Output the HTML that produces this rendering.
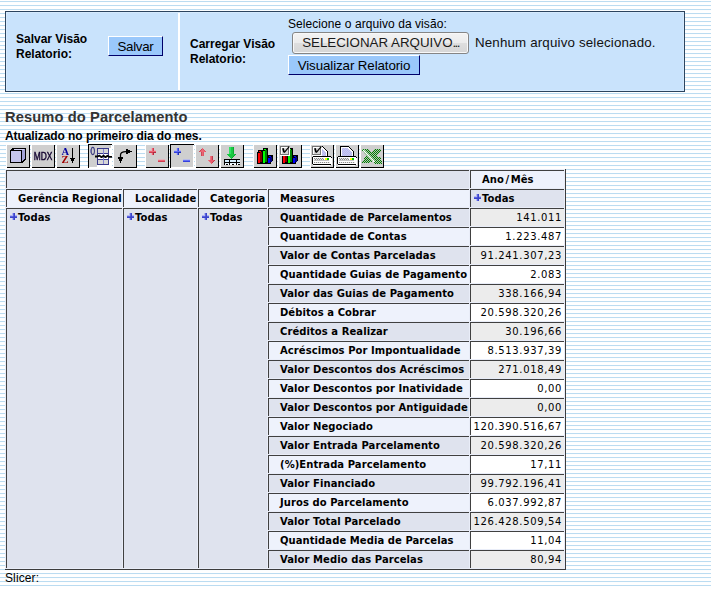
<!DOCTYPE html><html lang="pt"><head><meta charset="utf-8"><title>Resumo do Parcelamento</title><style>
html,body{margin:0;padding:0}
body{width:711px;height:590px;overflow:hidden;position:relative;background:#fff;
 background-image:repeating-linear-gradient(to bottom,#fff 0,#fff 1px,#bbdcf1 1px,#bbdcf1 2px,#fcfeff 2px,#fcfeff 3px,#fff 3px,#fff 4px);
 font-family:"Liberation Sans",Arial,sans-serif;font-size:12px;color:#000}
.abs{position:absolute}
#box{left:5px;top:11px;width:678px;height:79px;border:1px solid #2c445e;background:#d6eafd}
#box .c{position:absolute;top:1px;height:77px;background:#c9e3fc}
#c1{left:1px;width:171px}
#c2{left:174px;width:503px}
#dv{position:absolute;left:172px;top:1px;width:2px;height:77px;background:#fff}
.lbl{font-weight:bold;font-size:12px;line-height:15px;white-space:nowrap}
.btn{box-sizing:border-box;background:#9ac8fb;border:1px solid;border-color:#fff #00006a #00006a #fff;font-size:13.33px;letter-spacing:-0.1px;text-align:center;white-space:nowrap;color:#000}
#title{left:5px;top:109px;font-weight:bold;font-size:14.67px;line-height:17px;color:#333;white-space:nowrap;letter-spacing:.12px}
#sub{left:5px;top:129px;font-weight:bold;font-size:12px;line-height:14px;white-space:nowrap;letter-spacing:-0.08px}
#slicer{left:5px;top:571px;font-size:12px;line-height:14px;letter-spacing:.12px}
#bot{left:0;top:586px;width:711px;height:4px;background:#fff}
#tb{left:0;top:144px;height:24px;width:400px;will-change:transform}
#tb svg{position:absolute;top:0;width:24px;height:24px}
table.mdx{position:absolute;left:5px;top:169px;border-collapse:separate;border-spacing:1px;background:#e9edf8;border-right:1px solid #3c3c3c;border-bottom:1px solid #3c3c3c;
 font-family:"DejaVu Sans",Verdana,sans-serif;table-layout:fixed;width:561px}
table.mdx th,table.mdx td{box-sizing:border-box;height:18px;padding:0;border-top:1px solid #404040;border-left:1px solid #404040;font-size:10px;line-height:13px;white-space:nowrap;overflow:hidden;vertical-align:top}
table.mdx th{font-weight:bold;text-align:left;padding:2px 0 0 11px;letter-spacing:.07px}
table.mdx th.todas{padding-left:3px}
table.mdx td{font-size:10px;letter-spacing:0.64px;text-align:right;padding:2px 2px 0 0;font-weight:normal}
.d{background:#dfe3ee}
.l{background:#eef2fc}
.e{background:#fff}
.o{background:#ececec}
.plus{display:inline-block;width:7px;height:7px;vertical-align:top;margin:2px 1px 0 0}
</style></head><body>

<div id="box" class="abs">
 <div class="c" id="c1"></div><div class="c" id="c2"></div><div id="dv"></div>
 <div class="abs lbl" style="left:10px;top:20px">Salvar Visão<br>Relatorio:</div>
 <div class="abs btn" style="left:102px;top:24px;width:55px;height:20px;line-height:18px;padding-top:1px;letter-spacing:-.3px">Salvar</div>
 <div class="abs lbl" style="left:184px;top:25px">Carregar Visão<br>Relatorio:</div>
 <div class="abs" style="left:282px;top:5px;font-size:12px;letter-spacing:.07px;line-height:14px;white-space:nowrap">Selecione o arquivo da visão:</div>
 <div class="abs" id="fbtn" style="left:286px;top:20px;width:177px;height:22px;box-sizing:border-box;border:1px solid #858585;border-radius:3px;box-shadow:inset 0 0 0 1px #f8f8f8;background:linear-gradient(#f3f3f3 0,#ececec 48%,#dedede 52%,#d6d6d6 100%);font-size:13.33px;line-height:20px;text-align:center;white-space:nowrap;color:#1a1a1a">SELECIONAR ARQUIVO<span style="letter-spacing:-1.6px">...</span></div>
 <div class="abs" style="left:469px;top:23px;font-size:13.33px;line-height:16px;white-space:nowrap;color:#111;letter-spacing:.16px">Nenhum arquivo selecionado.</div>
 <div class="abs btn" style="left:282px;top:43px;width:132px;height:20px;line-height:18px;padding-top:1px">Visualizar Relatorio</div>
</div>
<div id="title" class="abs">Resumo do Parcelamento</div>
<div id="sub" class="abs">Atualizado no primeiro dia do mes.</div>

<div id="tb" class="abs"><svg style="position:absolute;width:0;height:0" width="0" height="0"><defs><pattern id="gd" width="2" height="2" patternUnits="userSpaceOnUse"><rect width="2" height="2" fill="#b4c0b4"/><rect x="0" y="0" width="1" height="1" fill="#008000"/><rect x="1" y="1" width="1" height="1" fill="#008000"/></pattern><pattern id="dith" width="2" height="2" patternUnits="userSpaceOnUse"><rect width="2" height="2" fill="#c8c8f4"/><rect x="0" y="0" width="1" height="1" fill="#b8b8ec"/><rect x="1" y="1" width="1" height="1" fill="#b8b8ec"/></pattern></defs></svg>
<svg style="left:6px" viewBox="0 0 24 24" shape-rendering="crispEdges" ><rect x="0" y="0" width="24" height="24" fill="#fff"/><rect x="1" y="1" width="23" height="23" fill="#000"/><rect x="1" y="1" width="22" height="22" fill="#cfcfcf"/><polygon points="4,6 7,4 20,4 20,15 16,19 4,19" fill="#000"/><polygon points="8,5 19,5 19,6 8,6" fill="#d4d4f4"/><polygon points="7,6 8,5 16,5 15,6" fill="#d4d4f4"/><polygon points="16,6 19,5 19,14 16,17" fill="#a4a4d8"/><rect x="5" y="7" width="10" height="11" fill="#c4c4ec"/></svg>
<svg style="left:31px" viewBox="0 0 24 24" shape-rendering="crispEdges" ><rect x="0" y="0" width="24" height="24" fill="#fff"/><rect x="1" y="1" width="23" height="23" fill="#000"/><rect x="1" y="1" width="22" height="22" fill="#cfcfcf"/><text x="2.8" y="16" font-family="Liberation Sans,Arial,sans-serif" font-size="11" fill="#140430" stroke="#140430" stroke-width="0.45" textLength="18.6" lengthAdjust="spacingAndGlyphs">MDX</text></svg>
<svg style="left:56px" viewBox="0 0 24 24" shape-rendering="crispEdges" ><rect x="0" y="0" width="24" height="24" fill="#fff"/><rect x="1" y="1" width="23" height="23" fill="#000"/><rect x="1" y="1" width="22" height="22" fill="#cfcfcf"/><text x="5.4" y="11" font-family="Liberation Serif,serif" font-size="9.3" font-weight="bold" fill="#0000a0" textLength="7.6" lengthAdjust="spacingAndGlyphs">A</text><text x="5.5" y="19" font-family="Liberation Serif,serif" font-size="9.3" font-weight="bold" fill="#a00000" textLength="7" lengthAdjust="spacingAndGlyphs">Z</text><rect x="16" y="4" width="1" height="15" fill="#000"/><rect x="14" y="14" width="5" height="1" fill="#000"/><rect x="15" y="15" width="3" height="2" fill="#000"/></svg>
<svg style="left:88px" viewBox="0 0 24 24" shape-rendering="crispEdges" ><rect x="0" y="0" width="24" height="24" fill="#000"/><rect x="1" y="1" width="23" height="23" fill="#fff"/><rect x="1" y="1" width="22" height="22" fill="#cfcfcf"/><rect x="21" y="4" width="2" height="19" fill="#fff"/><rect x="9" y="21" width="14" height="2" fill="#fff"/><rect x="9" y="4" width="12" height="17" fill="#38388a"/><rect x="10" y="5" width="5" height="4" fill="#d6d6d6"/><rect x="16" y="5" width="4" height="4" fill="#d6d6d6"/><rect x="10" y="10" width="5" height="5" fill="#fff"/><rect x="16" y="10" width="4" height="5" fill="#fff"/><rect x="10" y="16" width="5" height="4" fill="#d6d6d6"/><rect x="16" y="16" width="4" height="4" fill="#d6d6d6"/><rect x="15" y="5" width="1" height="15" fill="#8484d4"/><rect x="2" y="5" width="1" height="4" fill="#a8a8d0"/><text x="2.6" y="11" font-family="Liberation Sans,Arial,sans-serif" font-size="11" fill="#2c2c78" stroke="#2c2c78" stroke-width="0.3" textLength="4.6" lengthAdjust="spacingAndGlyphs">0</text><path d="M7,12.5 L9.5,12.5 L11.5,11.6 L13.5,13.2 L15.5,11.7 L17.5,13.2 L19.5,11.7 L21.5,12.9 L24,12.9" fill="none" stroke="#000" stroke-width="1.8" stroke-linejoin="round" shape-rendering="geometricPrecision"/></svg>
<svg style="left:113px" viewBox="0 0 24 24" shape-rendering="crispEdges" ><rect x="0" y="0" width="24" height="24" fill="#fff"/><rect x="1" y="1" width="23" height="23" fill="#000"/><rect x="1" y="1" width="22" height="22" fill="#cfcfcf"/><path d="M7.5,13 V11 C7.5,8.5 9.5,7.5 13,7.5" fill="none" stroke="#000" stroke-width="1.25" shape-rendering="geometricPrecision"/><rect x="13" y="5" width="2" height="5" fill="#000"/><rect x="15" y="6" width="2" height="3" fill="#000"/><rect x="17" y="7" width="2" height="1" fill="#000"/><rect x="5" y="13" width="5" height="2" fill="#000"/><rect x="6" y="15" width="3" height="2" fill="#000"/><rect x="7" y="17" width="1" height="2" fill="#000"/></svg>
<svg style="left:145px" viewBox="0 0 24 24" shape-rendering="crispEdges" ><rect x="0" y="0" width="24" height="24" fill="#fff"/><rect x="1" y="1" width="23" height="23" fill="#000"/><rect x="1" y="1" width="22" height="22" fill="#cfcfcf"/><rect x="6" y="4" width="1" height="7" fill="#e4b4bc"/><rect x="4" y="6" width="7" height="1" fill="#e4b4bc"/><rect x="7" y="4" width="1" height="7" fill="#ec6474"/><rect x="8" y="4" width="1" height="7" fill="#d03c50"/><rect x="4" y="7" width="7" height="1" fill="#ec6474"/><rect x="4" y="8" width="7" height="1" fill="#d03c50"/><rect x="8" y="8" width="1" height="1" fill="#b02c40"/><rect x="8" y="9" width="1" height="2" fill="#b02c40"/><rect x="9" y="8" width="2" height="1" fill="#b02c40"/><rect x="13" y="15" width="7" height="1" fill="#e4b4bc"/><rect x="13" y="16" width="7" height="1" fill="#ec6474"/><rect x="13" y="17" width="7" height="1" fill="#d03c50"/></svg>
<svg style="left:170px" viewBox="0 0 24 24" shape-rendering="crispEdges" ><rect x="0" y="0" width="24" height="24" fill="#000"/><rect x="1" y="1" width="23" height="23" fill="#fff"/><rect x="1" y="1" width="22" height="22" fill="#cfcfcf"/><rect x="6" y="4" width="1" height="7" fill="#b8bce8"/><rect x="4" y="6" width="7" height="1" fill="#b8bce8"/><rect x="7" y="4" width="1" height="7" fill="#6470f4"/><rect x="8" y="4" width="1" height="7" fill="#3440dc"/><rect x="4" y="7" width="7" height="1" fill="#6470f4"/><rect x="4" y="8" width="7" height="1" fill="#3440dc"/><rect x="8" y="8" width="1" height="1" fill="#2430b0"/><rect x="8" y="9" width="1" height="2" fill="#2430b0"/><rect x="9" y="8" width="2" height="1" fill="#2430b0"/><rect x="13" y="15" width="7" height="1" fill="#b8bce8"/><rect x="13" y="16" width="7" height="1" fill="#6470f4"/><rect x="13" y="17" width="7" height="1" fill="#3440dc"/></svg>
<svg style="left:195px" viewBox="0 0 24 24" shape-rendering="crispEdges" ><rect x="0" y="0" width="24" height="24" fill="#fff"/><rect x="1" y="1" width="23" height="23" fill="#000"/><rect x="1" y="1" width="22" height="22" fill="#cfcfcf"/><rect x="7" y="4" width="1" height="1" fill="#ec6674"/><rect x="6" y="5" width="3" height="1" fill="#ec6674"/><rect x="5" y="6" width="5" height="1" fill="#ec6674"/><rect x="4" y="7" width="7" height="1" fill="#ec6674"/><rect x="6" y="8" width="3" height="4" fill="#ec6674"/><rect x="6" y="8" width="1" height="4" fill="#c84858"/><rect x="8" y="8" width="1" height="4" fill="#dc5866"/><rect x="6" y="5" width="1" height="1" fill="#c84858"/><rect x="8" y="5" width="1" height="1" fill="#dc5866"/><rect x="5" y="6" width="1" height="1" fill="#c84858"/><rect x="9" y="6" width="1" height="1" fill="#dc5866"/><rect x="4" y="7" width="1" height="1" fill="#c84858"/><rect x="10" y="7" width="1" height="1" fill="#dc5866"/><rect x="15" y="12" width="3" height="4" fill="#e85c6c"/><rect x="15" y="12" width="1" height="4" fill="#ec7480"/><rect x="17" y="12" width="1" height="4" fill="#bc3c4c"/><rect x="13" y="16" width="7" height="1" fill="#e85c6c"/><rect x="13" y="16" width="1" height="1" fill="#ec7480"/><rect x="19" y="16" width="1" height="1" fill="#bc3c4c"/><rect x="14" y="17" width="5" height="1" fill="#e85c6c"/><rect x="14" y="17" width="1" height="1" fill="#ec7480"/><rect x="18" y="17" width="1" height="1" fill="#bc3c4c"/><rect x="15" y="18" width="3" height="1" fill="#e85c6c"/><rect x="15" y="18" width="1" height="1" fill="#ec7480"/><rect x="17" y="18" width="1" height="1" fill="#bc3c4c"/><rect x="16" y="19" width="1" height="1" fill="#e85c6c"/></svg>
<svg style="left:220px" viewBox="0 0 24 24" shape-rendering="crispEdges" ><rect x="0" y="0" width="24" height="24" fill="#fff"/><rect x="1" y="1" width="23" height="23" fill="#000"/><rect x="1" y="1" width="22" height="22" fill="#cfcfcf"/><rect x="9" y="3" width="5" height="7" fill="#18cc44"/><rect x="9" y="3" width="2" height="7" fill="#34e064"/><rect x="13" y="3" width="1" height="7" fill="#10a434"/><rect x="7" y="10" width="9" height="1" fill="#18c840"/><rect x="15" y="10" width="1" height="1" fill="#10a030"/><rect x="8" y="11" width="7" height="1" fill="#18c840"/><rect x="14" y="11" width="1" height="1" fill="#10a030"/><rect x="9" y="12" width="5" height="1" fill="#18c840"/><rect x="13" y="12" width="1" height="1" fill="#10a030"/><rect x="10" y="13" width="3" height="1" fill="#18c840"/><rect x="12" y="13" width="1" height="1" fill="#10a030"/><rect x="11" y="14" width="1" height="1" fill="#18c840"/><rect x="4" y="15" width="16" height="6" fill="#fff"/><rect x="5" y="16" width="4" height="2" fill="#d4ecfc"/><rect x="10" y="16" width="6" height="2" fill="#d4ecfc"/><rect x="17" y="16" width="3" height="2" fill="#d4ecfc"/><rect x="5" y="19" width="4" height="1" fill="#e4f2fc"/><rect x="10" y="19" width="6" height="1" fill="#e4f2fc"/><rect x="17" y="19" width="3" height="1" fill="#e4f2fc"/><rect x="4" y="15" width="16" height="1" fill="#000"/><rect x="4" y="18" width="16" height="1" fill="#000"/><rect x="4" y="15" width="1" height="6" fill="#000"/><rect x="9" y="15" width="1" height="6" fill="#000"/><rect x="16" y="15" width="1" height="6" fill="#000"/><rect x="6" y="20" width="2" height="1" fill="#000"/><rect x="12" y="20" width="2" height="1" fill="#000"/><rect x="18" y="20" width="2" height="1" fill="#000"/></svg>
<svg style="left:253px" viewBox="0 0 24 24" shape-rendering="crispEdges" ><rect x="0" y="0" width="24" height="24" fill="#fff"/><rect x="1" y="1" width="23" height="23" fill="#000"/><rect x="1" y="1" width="22" height="22" fill="#cfcfcf"/><rect x="4" y="8" width="6" height="12" fill="#000"/><rect x="5" y="6" width="5" height="2" fill="#000"/><rect x="5" y="9" width="2" height="10" fill="#ff0000"/><rect x="6" y="7" width="2" height="1" fill="#ff0000"/><rect x="7" y="8" width="2" height="10" fill="#800000"/><rect x="9" y="6" width="6" height="14" fill="#000"/><rect x="10" y="4" width="5" height="2" fill="#000"/><rect x="10" y="7" width="2" height="12" fill="#00ff00"/><rect x="11" y="5" width="2" height="1" fill="#00ff00"/><rect x="12" y="6" width="2" height="12" fill="#008000"/><rect x="14" y="13" width="5" height="7" fill="#000"/><rect x="15" y="11" width="5" height="7" fill="#000"/><rect x="15" y="14" width="2" height="5" fill="#0000ff"/><rect x="16" y="12" width="2" height="1" fill="#0000ff"/><rect x="17" y="13" width="2" height="5" fill="#000080"/><rect x="18" y="18" width="2" height="2" fill="#cfcfcf"/><rect x="19" y="17" width="1" height="1" fill="#cfcfcf"/></svg>
<svg style="left:278px" viewBox="0 0 24 24" shape-rendering="crispEdges" ><rect x="0" y="0" width="24" height="24" fill="#fff"/><rect x="1" y="1" width="23" height="23" fill="#000"/><rect x="1" y="1" width="22" height="22" fill="#cfcfcf"/><rect x="4" y="8" width="6" height="12" fill="#000"/><rect x="5" y="6" width="5" height="2" fill="#000"/><rect x="5" y="9" width="2" height="10" fill="#ff0000"/><rect x="6" y="7" width="2" height="1" fill="#ff0000"/><rect x="7" y="8" width="2" height="10" fill="#800000"/><rect x="9" y="6" width="6" height="14" fill="#000"/><rect x="10" y="4" width="5" height="2" fill="#000"/><rect x="10" y="7" width="2" height="12" fill="#00ff00"/><rect x="11" y="5" width="2" height="1" fill="#00ff00"/><rect x="12" y="6" width="2" height="12" fill="#008000"/><rect x="14" y="13" width="5" height="7" fill="#000"/><rect x="15" y="11" width="5" height="7" fill="#000"/><rect x="15" y="14" width="2" height="5" fill="#0000ff"/><rect x="16" y="12" width="2" height="1" fill="#0000ff"/><rect x="17" y="13" width="2" height="5" fill="#000080"/><rect x="18" y="18" width="2" height="2" fill="#cfcfcf"/><rect x="19" y="17" width="1" height="1" fill="#cfcfcf"/><rect x="2" y="2" width="10" height="10" fill="#fff"/><rect x="2" y="2" width="9" height="9" fill="#747474"/><rect x="3" y="3" width="7" height="7" fill="#fff"/><rect x="4" y="4" width="6" height="6" fill="#d6d6d6"/><path d="M4.9,4.3 L6.1,8.3" stroke="#000" stroke-width="1.7" fill="none" shape-rendering="geometricPrecision"/><path d="M6.2,8.6 L11.4,2.3" stroke="#000" stroke-width="1.15" fill="none" shape-rendering="geometricPrecision"/></svg>
<svg style="left:310px" viewBox="0 0 24 24" shape-rendering="crispEdges" ><rect x="0" y="0" width="24" height="24" fill="#fff"/><rect x="1" y="1" width="23" height="23" fill="#000"/><rect x="1" y="1" width="22" height="22" fill="#cfcfcf"/><polygon points="4,2 13,2 18,8 18,12 4,12" fill="#000"/><polygon points="5,3 13,3 17,8 17,12 5,12" fill="#fff"/><polygon points="6,4 12,4 16,9 16,12 6,12" fill="url(#dith)"/><rect x="3" y="12" width="18" height="9" fill="#000"/><rect x="2" y="13" width="20" height="7" fill="#000"/><rect x="3" y="13" width="18" height="7" fill="#fff"/><rect x="3" y="21" width="17" height="1" fill="#fff"/><rect x="21" y="14" width="1" height="7" fill="#fff"/><rect x="4" y="14" width="10" height="2" fill="#e4e4e4"/><rect x="4" y="14" width="1" height="1" fill="#8c8c8c"/><rect x="5" y="15" width="1" height="1" fill="#8c8c8c"/><rect x="6" y="14" width="1" height="1" fill="#8c8c8c"/><rect x="7" y="15" width="1" height="1" fill="#8c8c8c"/><rect x="8" y="14" width="1" height="1" fill="#8c8c8c"/><rect x="9" y="15" width="1" height="1" fill="#8c8c8c"/><rect x="10" y="14" width="1" height="1" fill="#8c8c8c"/><rect x="11" y="15" width="1" height="1" fill="#8c8c8c"/><rect x="12" y="14" width="1" height="1" fill="#8c8c8c"/><rect x="13" y="15" width="1" height="1" fill="#8c8c8c"/><rect x="4" y="16" width="15" height="1" fill="#c4c4c4"/><rect x="4" y="18" width="16" height="1" fill="#e4e4e4"/><rect x="4" y="18" width="1" height="1" fill="#8c8c8c"/><rect x="6" y="18" width="1" height="1" fill="#8c8c8c"/><rect x="8" y="18" width="1" height="1" fill="#8c8c8c"/><rect x="10" y="18" width="1" height="1" fill="#8c8c8c"/><rect x="12" y="18" width="1" height="1" fill="#8c8c8c"/><rect x="14" y="18" width="1" height="1" fill="#8c8c8c"/><rect x="16" y="18" width="1" height="1" fill="#8c8c8c"/><rect x="18" y="18" width="1" height="1" fill="#8c8c8c"/><rect x="15" y="14" width="2" height="2" fill="#ffff00"/><rect x="17" y="14" width="2" height="2" fill="#00c800"/><rect x="2" y="2" width="10" height="10" fill="#fff"/><rect x="2" y="2" width="9" height="9" fill="#747474"/><rect x="3" y="3" width="7" height="7" fill="#fff"/><rect x="4" y="4" width="6" height="6" fill="#d6d6d6"/><path d="M4.9,4.3 L6.1,8.3" stroke="#000" stroke-width="1.7" fill="none" shape-rendering="geometricPrecision"/><path d="M6.2,8.6 L11.4,2.3" stroke="#000" stroke-width="1.15" fill="none" shape-rendering="geometricPrecision"/></svg>
<svg style="left:335px" viewBox="0 0 24 24" shape-rendering="crispEdges" ><rect x="0" y="0" width="24" height="24" fill="#fff"/><rect x="1" y="1" width="23" height="23" fill="#000"/><rect x="1" y="1" width="22" height="22" fill="#cfcfcf"/><polygon points="5,2 14,2 19,8 19,12 5,12" fill="#000"/><polygon points="6,3 14,3 18,8 18,12 6,12" fill="#fff"/><polygon points="7,4 13,4 17,9 17,12 7,12" fill="url(#dith)"/><rect x="3" y="12" width="18" height="9" fill="#000"/><rect x="2" y="13" width="20" height="7" fill="#000"/><rect x="3" y="13" width="18" height="7" fill="#fff"/><rect x="3" y="21" width="17" height="1" fill="#fff"/><rect x="21" y="14" width="1" height="7" fill="#fff"/><rect x="4" y="14" width="10" height="2" fill="#e4e4e4"/><rect x="4" y="14" width="1" height="1" fill="#8c8c8c"/><rect x="5" y="15" width="1" height="1" fill="#8c8c8c"/><rect x="6" y="14" width="1" height="1" fill="#8c8c8c"/><rect x="7" y="15" width="1" height="1" fill="#8c8c8c"/><rect x="8" y="14" width="1" height="1" fill="#8c8c8c"/><rect x="9" y="15" width="1" height="1" fill="#8c8c8c"/><rect x="10" y="14" width="1" height="1" fill="#8c8c8c"/><rect x="11" y="15" width="1" height="1" fill="#8c8c8c"/><rect x="12" y="14" width="1" height="1" fill="#8c8c8c"/><rect x="13" y="15" width="1" height="1" fill="#8c8c8c"/><rect x="4" y="16" width="15" height="1" fill="#c4c4c4"/><rect x="4" y="18" width="16" height="1" fill="#e4e4e4"/><rect x="4" y="18" width="1" height="1" fill="#8c8c8c"/><rect x="6" y="18" width="1" height="1" fill="#8c8c8c"/><rect x="8" y="18" width="1" height="1" fill="#8c8c8c"/><rect x="10" y="18" width="1" height="1" fill="#8c8c8c"/><rect x="12" y="18" width="1" height="1" fill="#8c8c8c"/><rect x="14" y="18" width="1" height="1" fill="#8c8c8c"/><rect x="16" y="18" width="1" height="1" fill="#8c8c8c"/><rect x="18" y="18" width="1" height="1" fill="#8c8c8c"/><rect x="15" y="14" width="2" height="2" fill="#ffff00"/><rect x="17" y="14" width="2" height="2" fill="#00c800"/></svg>
<svg style="left:360px" viewBox="0 0 24 24" shape-rendering="crispEdges" ><rect x="0" y="0" width="24" height="24" fill="#fff"/><rect x="1" y="1" width="23" height="23" fill="#000"/><rect x="1" y="1" width="22" height="22" fill="#cfcfcf"/><polygon points="2,5 8,5 11.5,8 15,5 21,5 21,7 17,11.5 19,13 21,13 21,15 19.5,15 22,18 22,20 15.5,20 12.8,16.6 9.6,19 2,19 2,17.5 6.5,12 2,6.5" fill="url(#gd)"/><path d="M3.2,6.2 L14.6,17.8" stroke="#fff" stroke-width="1.5" shape-rendering="geometricPrecision"/></svg></div>
<table class="mdx" cellspacing="1"><colgroup><col style="width:116px"><col style="width:74px"><col style="width:69px"><col style="width:201px"><col style="width:94px"></colgroup>
<tr><th class="d" colspan="4"></th><th class="l">Ano<span style="padding:0 1.5px">/</span>Mês</th></tr>
<tr><th class="l">Gerência Regional</th><th class="l">Localidade</th><th class="l">Categoria</th><th class="l">Measures</th><th class="d todas"><svg class="plus" viewBox="0 0 7 7" shape-rendering="crispEdges"><rect x="2" y="0" width="1" height="7" fill="#b4b8ee"/><rect x="0" y="2" width="7" height="1" fill="#b4b8ee"/><rect x="3" y="0" width="1" height="7" fill="#5c64e0"/><rect x="0" y="3" width="7" height="1" fill="#5c64e0"/><rect x="4" y="0" width="1" height="7" fill="#3c44c8"/><rect x="0" y="4" width="7" height="1" fill="#3c44c8"/><rect x="3" y="3" width="1" height="1" fill="#4850d4"/></svg>Todas</th></tr>
<tr><th class="d todas" rowspan="19"><svg class="plus" viewBox="0 0 7 7" shape-rendering="crispEdges"><rect x="2" y="0" width="1" height="7" fill="#b4b8ee"/><rect x="0" y="2" width="7" height="1" fill="#b4b8ee"/><rect x="3" y="0" width="1" height="7" fill="#5c64e0"/><rect x="0" y="3" width="7" height="1" fill="#5c64e0"/><rect x="4" y="0" width="1" height="7" fill="#3c44c8"/><rect x="0" y="4" width="7" height="1" fill="#3c44c8"/><rect x="3" y="3" width="1" height="1" fill="#4850d4"/></svg>Todas</th><th class="d todas" rowspan="19"><svg class="plus" viewBox="0 0 7 7" shape-rendering="crispEdges"><rect x="2" y="0" width="1" height="7" fill="#b4b8ee"/><rect x="0" y="2" width="7" height="1" fill="#b4b8ee"/><rect x="3" y="0" width="1" height="7" fill="#5c64e0"/><rect x="0" y="3" width="7" height="1" fill="#5c64e0"/><rect x="4" y="0" width="1" height="7" fill="#3c44c8"/><rect x="0" y="4" width="7" height="1" fill="#3c44c8"/><rect x="3" y="3" width="1" height="1" fill="#4850d4"/></svg>Todas</th><th class="d todas" rowspan="19"><svg class="plus" viewBox="0 0 7 7" shape-rendering="crispEdges"><rect x="2" y="0" width="1" height="7" fill="#b4b8ee"/><rect x="0" y="2" width="7" height="1" fill="#b4b8ee"/><rect x="3" y="0" width="1" height="7" fill="#5c64e0"/><rect x="0" y="3" width="7" height="1" fill="#5c64e0"/><rect x="4" y="0" width="1" height="7" fill="#3c44c8"/><rect x="0" y="4" width="7" height="1" fill="#3c44c8"/><rect x="3" y="3" width="1" height="1" fill="#4850d4"/></svg>Todas</th><th class="d">Quantidade de Parcelamentos</th><td class="o">141.011</td></tr>
<tr><th class="l">Quantidade de Contas</th><td class="e">1.223.487</td></tr>
<tr><th class="d">Valor de Contas Parceladas</th><td class="o">91.241.307,23</td></tr>
<tr><th class="l">Quantidade Guias de Pagamento</th><td class="e">2.083</td></tr>
<tr><th class="d">Valor das Guias de Pagamento</th><td class="o">338.166,94</td></tr>
<tr><th class="l">Débitos a Cobrar</th><td class="e">20.598.320,26</td></tr>
<tr><th class="d">Créditos a Realizar</th><td class="o">30.196,66</td></tr>
<tr><th class="l">Acréscimos Por Impontualidade</th><td class="e">8.513.937,39</td></tr>
<tr><th class="d">Valor Descontos dos Acréscimos</th><td class="o">271.018,49</td></tr>
<tr><th class="l">Valor Descontos por Inatividade</th><td class="e">0,00</td></tr>
<tr><th class="d">Valor Descontos por Antiguidade</th><td class="o">0,00</td></tr>
<tr><th class="l">Valor Negociado</th><td class="e">120.390.516,67</td></tr>
<tr><th class="d">Valor Entrada Parcelamento</th><td class="o">20.598.320,26</td></tr>
<tr><th class="l">(%)Entrada Parcelamento</th><td class="e">17,11</td></tr>
<tr><th class="d">Valor Financiado</th><td class="o">99.792.196,41</td></tr>
<tr><th class="l">Juros do Parcelamento</th><td class="e">6.037.992,87</td></tr>
<tr><th class="d">Valor Total Parcelado</th><td class="o">126.428.509,54</td></tr>
<tr><th class="l">Quantidade Media de Parcelas</th><td class="e">11,04</td></tr>
<tr><th class="d">Valor Medio das Parcelas</th><td class="o">80,94</td></tr>
</table>
<div id="bot" class="abs"></div><div id="slicer" class="abs">Slicer:</div>
</body></html>
